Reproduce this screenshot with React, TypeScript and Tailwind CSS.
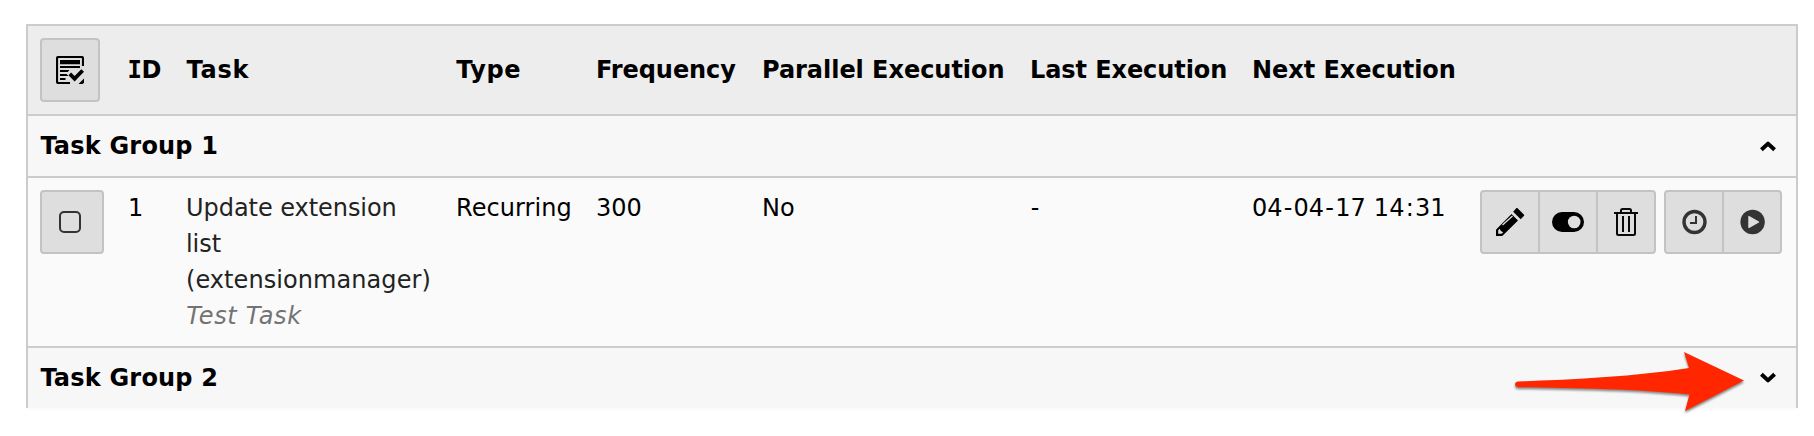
import type { ReactNode } from "react";

const columns =
  "grid grid-cols-[88px_58px_270px_140px_166px_267.5px_222.5px_228px_1fr] pl-3";

function SelectAllIcon() {
  return (
    <svg className="block h-7 w-7" viewBox="0 0 28 28">
      <path
        d="M14 27H2.500C1.700 27 1 26.300 1 25.500V2.500C1 1.700 1.700 1 2.500 1h23c.8 0 1.500.7 1.500 1.500V10"
        fill="none"
        stroke="#000"
        strokeWidth="2.200"
      />
      <path d="M4 4h20v4.200H4zM4 10h20v1.900H4zM4 14h9.500l-1.800 2H4zM4 18h6.500l2 2H4zM4 22h5.500v2H4z" />
      <path d="M12.500 19.200l2.600-2.600 3.500 3.400 6.700-6.800 2.700 2.600-9.400 9.800z" />
      <path d="M28 22.500V26c0 1.200-.8 2-2 2h-3.500z" />
    </svg>
  );
}

function PencilIcon() {
  return (
    <svg className="block h-8 w-8" viewBox="0 0 32 32">
      <path d="M2.400 23.200L17.500 8l6.500 6.500L8.800 29.600c-.3.300-.6.400-1 .4H2v-5.800c0-.4.100-.700.400-1zM19.200 5.700L22 2.400c.5-.6 1.200-.6 1.800 0l6 6c.5.5.5 1.200 0 1.700l-3.100 3.100z" />
      <path d="M4.200 27.700V24.200l1.500-1.500 1.200 2.400 2.300 1.200-1.600 1.500H6z" fill="#dedede" />
      <path d="M8.500 19l10-9" stroke="#dedede" strokeWidth="1.300" />
    </svg>
  );
}

function ToggleIcon() {
  return (
    <svg className="block h-8 w-8" viewBox="0 0 32 32">
      <rect y="6" width="32" height="20" rx="10" />
      <circle cx="22.200" cy="16" r="6.300" fill="#dedede" />
    </svg>
  );
}

function TrashIcon() {
  return (
    <svg
      className="block h-8 w-8"
      viewBox="0 0 32 32"
      fill="none"
      stroke="#0a0a0a"
      strokeWidth="2"
    >
      <path d="M4 7h24" />
      <path d="M11 6.500V4.500C11 3.500 11.500 3 12.500 3h7c1 0 1.500.5 1.500 1.500v2" />
      <path d="M7 7v20.500c0 .9.600 1.500 1.500 1.500h15c.9 0 1.500-.6 1.500-1.500V7" />
      <path d="M13 10v16M19 10v16" />
    </svg>
  );
}

function ClockIcon() {
  return (
    <svg className="block h-8 w-8" viewBox="0 0 32 32" fill="none" stroke="#333">
      <circle cx="16.500" cy="16" r="10.500" strokeWidth="3.400" />
      <path d="M18 10v7h-6" strokeWidth="2" />
    </svg>
  );
}

function PlayIcon() {
  return (
    <svg className="block h-8 w-8" viewBox="0 0 32 32">
      <circle cx="16.600" cy="16" r="12.200" fill="#333" />
      <path
        d="M12.900 10.500v11l9.700-5.500z"
        fill="#dedede"
        stroke="#dedede"
        strokeWidth="1.200"
        strokeLinejoin="round"
      />
    </svg>
  );
}

function Chevron({ down = false }: { down?: boolean }) {
  return (
    <svg
      className="block h-3 w-4"
      viewBox="0 0 16 12"
      fill="none"
      stroke="#000"
      strokeWidth="4"
      strokeLinejoin="round"
    >
      <path
        d={down ? "M1.400 2.200L8 8.400l6.600-6.200" : "M1.400 9.800L8 3.600l6.600 6.200"}
      />
    </svg>
  );
}

function ActionButton({ label, children }: { label: string; children: ReactNode }) {
  return (
    <button
      aria-label={label}
      className="flex w-[58px] items-center justify-center border-r-2 border-[#c3c3c3] last:w-14 last:border-r-0"
    >
      {children}
    </button>
  );
}

function ButtonGroup({ children }: { children: ReactNode }) {
  return (
    <div className="flex h-16 rounded-[4px] border-2 border-[#c3c3c3] bg-[#dedede]">
      {children}
    </div>
  );
}

function GroupRow({
  title,
  collapsed = false,
  className,
}: {
  title: string;
  collapsed?: boolean;
  className: string;
}) {
  return (
    <div
      className={`flex items-center justify-between bg-[#f7f7f7] pl-3 pr-5 font-bold ${className}`}
    >
      <span className="ml-[0.4px] tracking-[0.2px]">{title}</span>
      <Chevron down={collapsed} />
    </div>
  );
}

function Hyphen() {
  return <span className="px-[1.2px]">-</span>;
}

export default function App() {
  return (
    <div className="relative h-[436px] w-[1814px] overflow-hidden bg-white pl-[26px] pt-6 font-['DejaVu_Sans',Verdana,sans-serif] text-2xl leading-9 text-black">
      <div className="w-[1772px] border-2 border-b-0 border-[#ccc]">
        <div className={`${columns} h-[88px] items-center bg-[#ededed] font-bold`}>
          <button
            aria-label="Select all"
            className="flex h-16 w-[60px] items-center justify-center rounded-[4px] border-2 border-[#c3c3c3] bg-[#dedede]"
          >
            <SelectAllIcon />
          </button>
          <span className="-ml-[0.5px] whitespace-nowrap leading-9">
            <span className="font-['DejaVu_Sans_Mono'] leading-none tracking-[-0.5px]">I</span>D
          </span>
          <span className="ml-[0.5px] tracking-[0.75px]">Task</span>
          <span className="ml-[0.3px] tracking-[0.5px]">Type</span>
          <span className="tracking-[-0.07px]">Frequency</span>
          <span className="tracking-[-0.04px]">Parallel Execution</span>
          <span className="ml-[0.5px] tracking-[-0.08px]">Last Execution</span>
          <span className="tracking-[-0.04px]">Next Execution</span>
        </div>

        <GroupRow title="Task Group 1" className="h-16 border-y-2 border-[#ccc]" />

        <div className={`${columns} h-[168px] items-start bg-[#fafafa] pt-3`}>
          <button
            aria-label="Select task"
            className="flex h-16 w-16 items-center rounded-[4px] border-2 border-[#c3c3c3] bg-[#dedede] pl-[17px]"
          >
            <span className="h-[22px] w-[22px] rounded-[5px] border-2 border-[#333]" />
          </button>
          <span>1</span>
          <div className="text-[#1f2322]">
            <div className="w-60 tracking-[-0.05px]">Update extension list</div>
            <div className="tracking-[0.07px]">(extensionmanager)</div>
            <div className="ml-[0.3px] italic tracking-[0.7px] text-[#737373]">Test Task</div>
          </div>
          <span className="tracking-[0.06px]">Recurring</span>
          <span>300</span>
          <span>No</span>
          <span>
            <Hyphen />
          </span>
          <span className="whitespace-nowrap">
            04
            <Hyphen />
            04
            <Hyphen />
            17 <span className="pl-[0.5px]">14</span>
            <span className="px-[1.3px]">:</span>31
          </span>
          <div className="flex gap-2">
            <ButtonGroup>
              <ActionButton label="Edit">
                <PencilIcon />
              </ActionButton>
              <ActionButton label="Toggle">
                <ToggleIcon />
              </ActionButton>
              <ActionButton label="Delete">
                <TrashIcon />
              </ActionButton>
            </ButtonGroup>
            <ButtonGroup>
              <ActionButton label="Schedule">
                <ClockIcon />
              </ActionButton>
              <ActionButton label="Run">
                <PlayIcon />
              </ActionButton>
            </ButtonGroup>
          </div>
        </div>

        <GroupRow title="Task Group 2" collapsed className="h-[62px] border-t-2 border-[#ccc]" />
      </div>
      <div className="h-0.5 w-[1772px] bg-[#fcfcfc]" />

      <svg
        className="absolute left-[1500px] top-[340px] h-[84px] w-[260px] drop-shadow-[0_2px_1px_rgba(0,0,0,0.45)]"
        viewBox="1500 340 260 84"
      >
        <path
          d="M1518 381.500C1575 379.500 1635 376.500 1689 368L1684 352L1744 380.500L1685 411L1689.500 394.500C1640 389 1575 388 1518 387.200C1514 387 1514 381.700 1518 381.500Z"
          fill="#ff2600"
        />
      </svg>
    </div>
  );
}
